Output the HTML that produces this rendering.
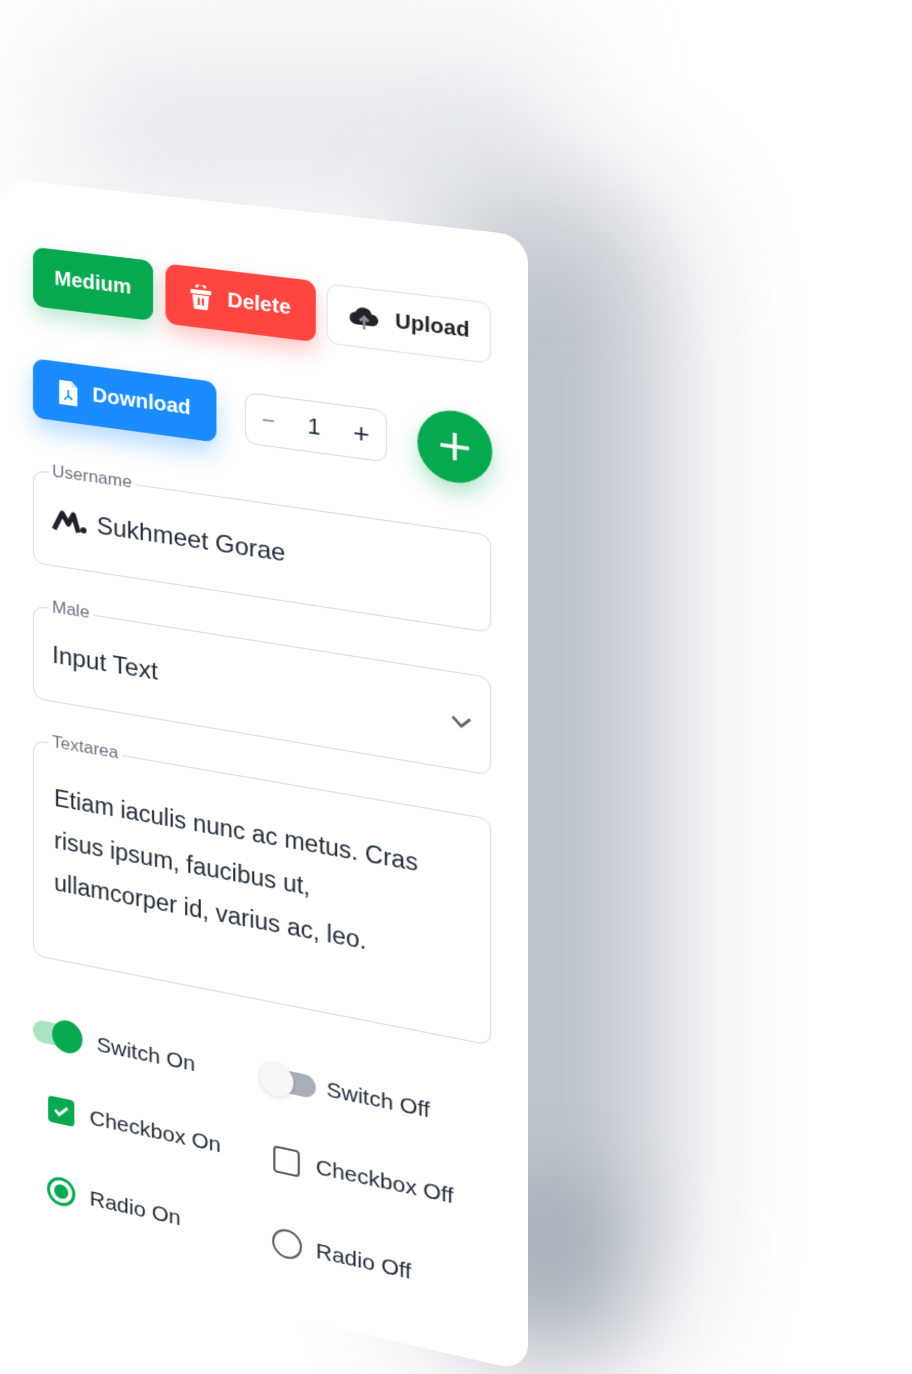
<!DOCTYPE html>
<html><head><meta charset="utf-8"><style>
html,body{margin:0;padding:0;width:912px;height:1374px;overflow:hidden;background:#fff;font-family:"Liberation Sans",sans-serif;}
.shadow{position:absolute;left:430px;top:200px;width:230px;height:1140px;background:#a3abb6;filter:blur(65px);opacity:.75;border-radius:60px;}
.shadow3{position:absolute;left:480px;top:1180px;width:140px;height:170px;background:#8e97a3;filter:blur(40px);opacity:.45;}
.shadow2{position:absolute;left:60px;top:40px;width:500px;height:180px;background:#d6dbe0;filter:blur(60px);opacity:.6;}
.card{position:absolute;left:0;top:0;width:500px;height:1072px;background:#fff;border-radius:26px;transform-origin:0 0;
transform:matrix3d(0.9965,0.0894,0,-0.00011268,0,1,0,0,0,0,1,0,0,178,0,1);}
.a{position:absolute;box-sizing:border-box;}
.btn{display:flex;align-items:center;justify-content:center;border-radius:11px;font-weight:bold;font-size:20px;color:#fff;gap:14px;}
.field{border:1.5px solid #d5d9df;border-radius:11px;}
.lbl{position:absolute;top:-12px;left:14px;background:#fff;padding:0 4px;font-size:17px;color:#6b7280;line-height:20px;}
.t{position:absolute;font-size:21px;color:#1f2937;white-space:nowrap;line-height:26px;}
</style></head><body>
<div class="shadow2"></div>
<div class="shadow"></div>
<div class="shadow3"></div>
<div class="card">
  <div class="a btn" style="left:33px;top:65px;width:118px;height:59px;background:#06a94f;box-shadow:0 10px 20px rgba(6,169,79,.25)">Medium</div>
  <div class="a btn" style="left:163px;top:66px;width:143px;height:59px;background:#ff4540;box-shadow:0 10px 20px rgba(255,69,64,.3)">
    <svg width="22" height="26" viewBox="0 0 22 26"><path d="M7 3a4 4 0 0 1 8 0" stroke="#fff" stroke-width="2.5" fill="none"/><rect x="1" y="5" width="20" height="4" rx="1" fill="#fff"/><path d="M3 10h16l-1.5 14h-13z" fill="#fff"/><rect x="8" y="13" width="2" height="7" fill="#ff4540"/><rect x="12" y="13" width="2" height="7" fill="#ff4540"/></svg>Delete</div>
  <div class="a btn" style="left:316px;top:67px;width:151px;height:58px;background:#fff;border:1.5px solid #dfe2e6;color:#1f2228">
    <svg width="30" height="26" viewBox="0 0 30 26"><path d="M8 20a6 6 0 0 1-1-12 8 8 0 0 1 15 1 5.5 5.5 0 0 1 1 11z" fill="#1f2228"/><path d="M15 24V13M11 16l4-4 4 4" stroke="#8a9099" stroke-width="2.5" fill="none"/></svg>Upload</div>
  <div class="a btn" style="left:33px;top:176px;width:179px;height:59px;background:#1a8cff;box-shadow:0 12px 22px rgba(26,140,255,.3)">
    <svg width="20" height="26" viewBox="0 0 20 26"><path d="M1 1h12l6 6v18H1z" fill="#fff"/><path d="M13 1v6h6" fill="#cfe5ff"/><path d="M10 10v6M10 16l-4 4M10 16l4 3" stroke="#1a8cff" stroke-width="1.6" fill="none"/></svg>Download</div>
  <div class="a field" style="left:239px;top:182px;width:133px;height:50px;display:flex;align-items:center;justify-content:space-around;font-size:22px;color:#1f2937">
    <span style="color:#888">−</span><span>1</span><span style="font-size:26px">+</span></div>
  <div class="a" style="left:400px;top:174px;width:68px;height:68px;border-radius:50%;background:#06a94f;box-shadow:0 10px 20px rgba(6,169,79,.3)">
    <svg width="68" height="68" viewBox="0 0 68 68"><path d="M34 21v26M21 34h26" stroke="#fff" stroke-width="3.5"/></svg></div>

  <div class="a field" style="left:33px;top:287px;width:434px;height:93px">
    <div class="lbl">Username</div>
    <svg style="position:absolute;left:18px;top:35px" width="34" height="22" viewBox="0 0 34 22"><path d="M2 20L10 3l6 10 5-10 5 17" stroke="#1f2228" stroke-width="5" fill="none" stroke-linejoin="round"/><circle cx="31" cy="17" r="3" fill="#1f2228"/></svg>
    <div class="t" style="left:62px;top:33px;font-size:24px">Sukhmeet Gorae</div>
  </div>
  <div class="a field" style="left:33px;top:422px;width:434px;height:93px">
    <div class="lbl">Male</div>
    <div class="t" style="left:18px;top:33px;font-size:24px">Input Text</div>
    <svg style="position:absolute;right:16px;top:40px" width="20" height="12" viewBox="0 0 20 12"><path d="M2 2l8 8 8-8" stroke="#5b6470" stroke-width="2.5" fill="none"/></svg>
  </div>
  <div class="a field" style="left:33px;top:556px;width:434px;height:215px">
    <div class="lbl">Textarea</div>
    <div class="t" style="left:20px;top:32px;font-size:23px;line-height:42px;white-space:normal;width:375px">Etiam iaculis nunc ac metus. Cras risus ipsum, faucibus ut,<br>ullamcorper id, varius ac, leo.</div>
  </div>

  <div class="a" style="left:33px;top:834px;width:46px;height:22px;border-radius:11px;background:#a9e3c2"></div>
  <div class="a" style="left:52px;top:829px;width:30px;height:32px;border-radius:50%;background:#06a94f"></div>
  <div class="t" style="left:96px;top:834px">Switch On</div>
  <div class="a" style="left:262px;top:834px;width:44px;height:22px;border-radius:11px;background:#a8aeb8"></div>
  <div class="a" style="left:253px;top:829px;width:32px;height:32px;border-radius:50%;background:#f7f7f8;box-shadow:0 1px 4px rgba(0,0,0,.15)"></div>
  <div class="t" style="left:316px;top:832px">Switch Off</div>

  <div class="a" style="left:48px;top:907px;width:26px;height:26px;border-radius:4px;background:#06a94f">
    <svg width="26" height="26" viewBox="0 0 26 26"><path d="M7 13l4 4 8-8" stroke="#fff" stroke-width="2.8" fill="none"/></svg></div>
  <div class="t" style="left:89px;top:908px">Checkbox On</div>
  <div class="a" style="left:266px;top:909px;width:25px;height:26px;border-radius:4px;border:2.5px solid #535b66"></div>
  <div class="t" style="left:306px;top:909px">Checkbox Off</div>

  <div class="a" style="left:47px;top:986px;width:28px;height:28px;border-radius:50%;border:3px solid #06a94f">
    <div style="position:absolute;left:4px;top:4px;width:14px;height:14px;border-radius:50%;background:#06a94f"></div></div>
  <div class="t" style="left:89px;top:988px">Radio On</div>
  <div class="a" style="left:265px;top:988px;width:28px;height:28px;border-radius:50%;border:2.5px solid #535b66"></div>
  <div class="t" style="left:306px;top:990px">Radio Off</div>
</div>
</body></html>
